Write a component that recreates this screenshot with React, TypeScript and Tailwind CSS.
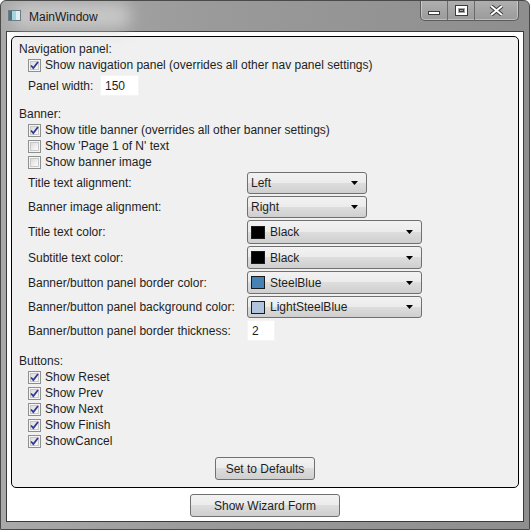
import React from 'react';

const font = { fontFamily: '"Liberation Sans", Arial, sans-serif' };

function CheckBox({ checked, label }: { checked: boolean; label: string }) {
  return (
    <div className="flex items-center h-[16px]">
      <div className="relative w-[13px] h-[13px] border border-[#8e8f8f] bg-[#f4f4f4] flex-shrink-0">
        <div className="absolute inset-[1px] border border-[#c8c8c8] bg-gradient-to-br from-[#dcdcdc] to-[#fbfbfb]" />
        {checked && (
          <svg className="absolute inset-0" width="11" height="11" viewBox="0 0 11 11">
            <path d="M2 5.5 L4.3 8 L9 2" fill="none" stroke="#343a92" strokeWidth="1.8" />
          </svg>
        )}
      </div>
      <span className="ml-[4px] whitespace-nowrap">{label}</span>
    </div>
  );
}

function Combo({ width, text, swatch }: { width: string; text: string; swatch?: string }) {
  return (
    <div
      className={`${width} h-full flex items-center rounded-[3px] border border-[#707070] bg-[linear-gradient(#f2f2f2_0%,#ebebeb_50%,#dddddd_50%,#cfcfcf_100%)] relative`}
    >
      {swatch && (
        <div className="ml-[3px] w-[14px] h-[13px] border border-[#1a1a1a]" style={{ background: swatch }} />
      )}
      <span className={swatch ? 'ml-[5px]' : 'ml-[3px]'}>{text}</span>
      <svg className="absolute right-[8px] top-1/2 -translate-y-1/2" width="7" height="4" viewBox="0 0 7 4">
        <path d="M0 0 H7 L3.5 4 Z" fill="#000" />
      </svg>
    </div>
  );
}

function TextBox({ width, value }: { width: string; value: string }) {
  return (
    <div className={`${width} h-[21px] bg-white border border-[#f4f4f4] flex items-center pl-[4px]`}>{value}</div>
  );
}

function WinButton({ width, text }: { width: string; text: string }) {
  return (
    <div
      className={`${width} h-[23px] flex items-center justify-center rounded-[3px] border border-[#707070] bg-[linear-gradient(#f2f2f2_0%,#ebebeb_50%,#dddddd_50%,#cfcfcf_100%)]`}
    >
      {text}
    </div>
  );
}

export default function App() {
  const grid: { label: string; h: string; control: React.ReactNode }[] = [
    { label: 'Title text alignment:', h: 'h-[24px]', control: <Combo width="w-[120px]" text="Left" /> },
    { label: 'Banner image alignment:', h: 'h-[24px]', control: <Combo width="w-[120px]" text="Right" /> },
    { label: 'Title text color:', h: 'h-[26px]', control: <Combo width="w-[175px]" text="Black" swatch="#000000" /> },
    { label: 'Subtitle text color:', h: 'h-[25px]', control: <Combo width="w-[175px]" text="Black" swatch="#000000" /> },
    { label: 'Banner/button panel border color:', h: 'h-[25px]', control: <Combo width="w-[175px]" text="SteelBlue" swatch="#4682b4" /> },
    { label: 'Banner/button panel background color:', h: 'h-[24px]', control: <Combo width="w-[175px]" text="LightSteelBlue" swatch="#b0c4de" /> },
  ];

  return (
    <div
      className="w-[530px] h-[530px] flex flex-col text-[12px] text-[#1e1e1e] bg-[linear-gradient(90deg,#a9a9a9_0%,#9a9a9a_40%,#8e8e8e_100%)] border border-[#4a4a4a] rounded-t-[6px] overflow-hidden"
      style={font}
    >
      {/* title bar */}
      <div className="h-[30px] flex items-start relative flex-shrink-0">
        <div className="absolute left-[10px] top-[2px] w-[120px] h-[26px] rounded-full bg-[#c8c8c8] blur-[8px]" />
        <div className="relative mt-[9px] ml-[7px] w-[13px] h-[11px] border border-[#6b7c86] bg-white flex">
          <div className="w-[3px] h-full bg-[#5d6d77]" />
          <div className="w-[4px] h-full bg-[#9fd6e0]" />
          <div className="flex-1 bg-[#dfeff2]" />
        </div>
        <span className="relative mt-[7px] ml-[8px] text-[12px] text-[#1a1a1a]">MainWindow</span>
        <div className="ml-auto mr-[10px] mt-[-1px] h-[21px] flex border border-[#5c5c5c] border-t-0 rounded-b-[5px] overflow-hidden bg-[linear-gradient(#b0b0b0,#9a9a9a)] shadow-[inset_0_0_0_1px_rgba(255,255,255,0.35)]">
          <div className="w-[27px] h-full flex items-center justify-center border-r border-[#6a6a6a]">
            <div className="w-[12px] h-[4px] bg-white border border-[#3c3c3c] mt-[5px]" />
          </div>
          <div className="w-[27px] h-full flex items-center justify-center border-r border-[#6a6a6a]">
            <div className="w-[11px] h-[9px] border-[2px] border-white outline outline-1 outline-[#3c3c3c] flex items-center justify-center">
              <div className="w-[5px] h-[3px] border border-[#3c3c3c]" />
            </div>
          </div>
          <div className="w-[43px] h-full flex items-center justify-center">
            <svg width="15" height="11" viewBox="0 0 15 11">
              <path d="M2 1 L13 10 M13 1 L2 10" stroke="#3c3c3c" strokeWidth="4" />
              <path d="M2 1 L13 10 M13 1 L2 10" stroke="#ffffff" strokeWidth="2" />
            </svg>
          </div>
        </div>
      </div>

      {/* client area */}
      <div className="mx-[5px] mb-[7px] flex-1 bg-white border border-[#3a3a3a] flex flex-col items-center">
        <div className="self-stretch mt-[4px] mx-[4px] h-[452px] border border-black rounded-[5px] bg-[#f0f0f0] pl-[7px] pt-[4px] flex flex-col">
          <div className="h-[16px] flex items-center">Navigation panel:</div>
          <div className="pl-[9px]">
            <CheckBox checked label="Show navigation panel (overrides all other nav panel settings)" />
          </div>
          <div className="pl-[9px] h-[23px] mt-[1px] flex items-center">
            <span className="w-[72px]">Panel width:</span>
            <TextBox width="w-[39px]" value="150" />
          </div>

          <div className="h-[16px] mt-[9px] flex items-center">Banner:</div>
          <div className="pl-[9px]">
            <CheckBox checked label="Show title banner (overrides all other banner settings)" />
            <CheckBox checked={false} label="Show 'Page 1 of N' text" />
            <CheckBox checked={false} label="Show banner image" />
          </div>

          <div className="pl-[9px] mt-[1px] flex flex-col">
            {grid.map((r) => (
              <div key={r.label} className={`${r.h} flex items-center py-[1px]`}>
                <span className="w-[219px]">{r.label}</span>
                {r.control}
              </div>
            ))}
            <div className="h-[23px] flex items-center">
              <span className="w-[219px]">Banner/button panel border thickness:</span>
              <TextBox width="w-[28px]" value="2" />
            </div>
          </div>

          <div className="h-[16px] mt-[11px] flex items-center">Buttons:</div>
          <div className="pl-[9px]">
            <CheckBox checked label="Show Reset" />
            <CheckBox checked label="Show Prev" />
            <CheckBox checked label="Show Next" />
            <CheckBox checked label="Show Finish" />
            <CheckBox checked label="ShowCancel" />
          </div>

          <div className="mt-[8px] flex justify-center pr-[7px]">
            <WinButton width="w-[100px]" text="Set to Defaults" />
          </div>
        </div>
        <div className="mt-[6px]">
          <WinButton width="w-[150px]" text="Show Wizard Form" />
        </div>
      </div>
    </div>
  );
}
